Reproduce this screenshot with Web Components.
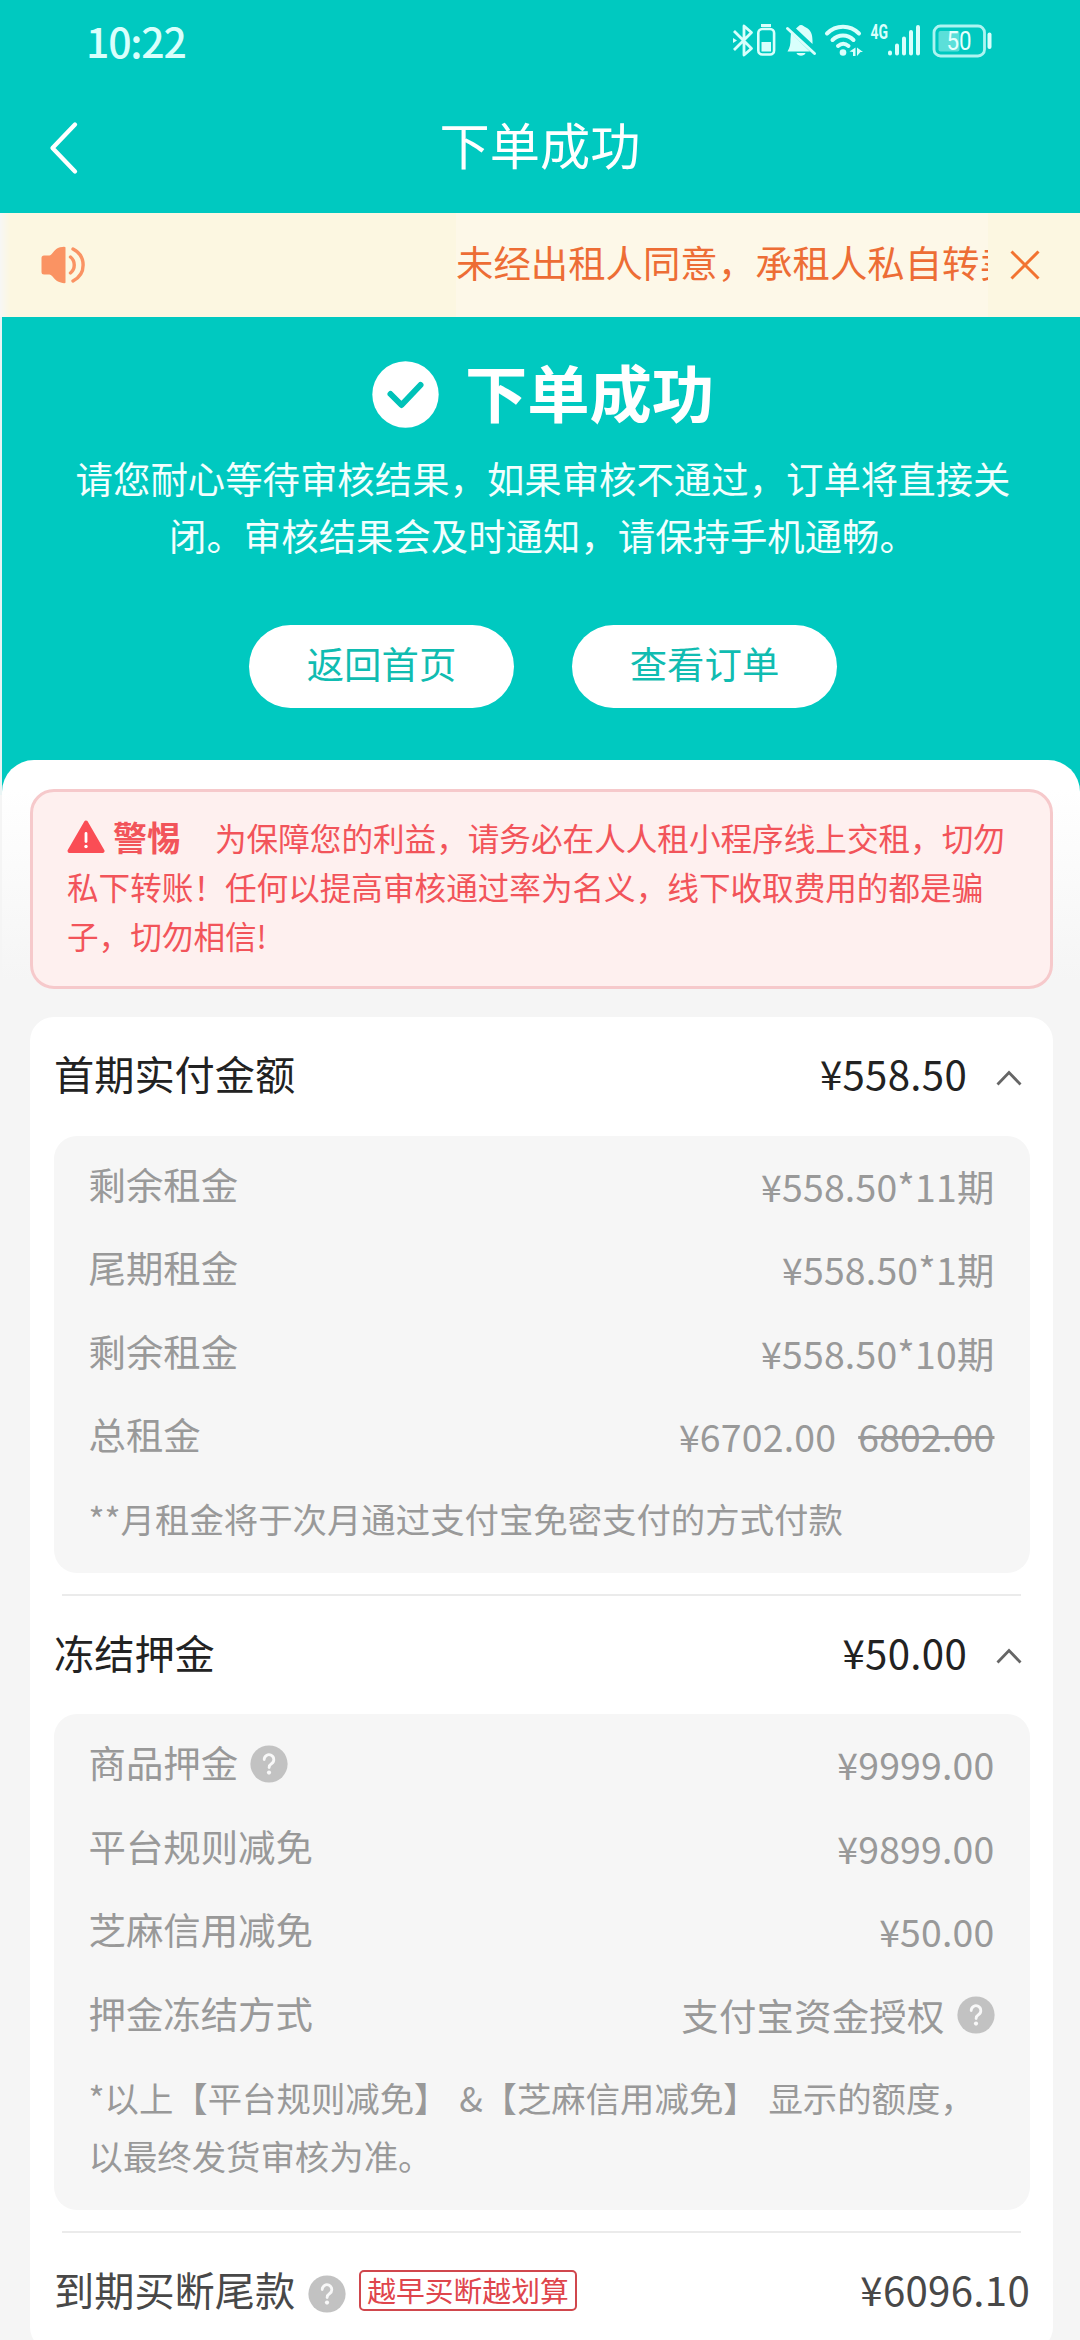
<!DOCTYPE html>
<html lang="zh-CN">
<head>
<meta charset="utf-8">
<title>下单成功</title>
<style>
html,body{margin:0;padding:0}
body{width:1080px;height:2340px;overflow:hidden;background:#f5f5f5;font-family:"Noto Sans CJK SC",sans-serif}
</style>
</head>
<body>
<order-page></order-page>
<script>
const define = (name, html) => {
  const tpl = document.createElement('template');
  tpl.innerHTML = html;
  customElements.define(name, class extends HTMLElement {
    constructor() {
      super();
      this.attachShadow({ mode: 'open' }).append(tpl.content.cloneNode(true));
    }
  });
};

define('help-icon', `
<style>:host{display:block;width:38px;height:38px;flex:none}svg{display:block}</style>
<svg width="38" height="38" viewBox="0 0 38 38"><circle cx="19" cy="19" r="18.6" fill="#c2c2c2"/>
<path d="M14.2 14.600a4.800 4.800 0 1 1 7.500 3.900c-1.800 1.200-2.600 2-2.600 4" fill="none" stroke="#f8f8f8" stroke-width="2.800" stroke-linecap="round"/><circle cx="19" cy="27.600" r="2.100" fill="#f8f8f8"/></svg>`);

define('fold-arrow', `
<style>:host{display:block;width:26px;height:16px;flex:none}svg{display:block}</style>
<svg width="26" height="16" viewBox="0 0 26 16"><path d="M1.500 14.500 13 2.500 24.500 14.500" fill="none" stroke="#666" stroke-width="2.800"/></svg>`);

define('status-bar', `
<style>
:host{display:flex;justify-content:space-between;align-items:center;height:84px;padding:0 86px 0 86px;color:#d9fffc;box-sizing:border-box}
.t{font-size:41px;line-height:80px;letter-spacing:-1.200px;font-weight:500;padding-bottom:4px}
svg{display:block;margin-bottom:4px}
</style>
<span class="t">10:22</span>
<svg width="266" height="48" viewBox="728 16 266 48" fill="none" stroke="#d9fffc">
  <path d="M734 31 751.500 48.500 744 55V26L751.500 32.500 734 50" stroke-width="2.800" stroke-linejoin="round"/>
  <path d="M733 38l4 2.500-4 2.500z" fill="#d9fffc" stroke="none"/>
  <rect x="758.300" y="29" width="15.800" height="25.500" rx="4" stroke-width="2.600"/>
  <path d="M761 25.500h10" stroke-width="3"/><rect x="761.500" y="42" width="9.500" height="9.500" fill="#d9fffc" stroke="none"/>
  <path d="M791 33 810 51.500H787.500C790 47.500 790.500 44 790.500 39ZM796 28.500C798 27 799 25 801 25c2 0 3 1.500 5 2.500 5 2.500 6.500 7 6.500 13.500V44ZM796.500 53h9c-1 3.500-8 3.500-9 0z" fill="#d9fffc" stroke="none"/>
  <path d="M787.500 28.500 814.500 53.500" stroke-width="3" stroke-linecap="round"/>
  <path d="M827 33.500c9-9 23-9 32 0M832.500 40c6-6 15-6 21 0M838 46c3.500-3 7-3 10.500 0" stroke-width="4" stroke-linecap="round"/>
  <circle cx="843" cy="52.500" r="3.300" fill="#d9fffc" stroke="none"/>
  <path d="M849.500 51.500l6-4v8.500h-2.500v-4zM857 47.500l6 4.500h-2.500l-3.500 4z" fill="#d9fffc" stroke="none"/>
  <text x="870.500" y="39.200" font-family="Roboto" font-size="19.500" font-weight="700" fill="#d9fffc" stroke="none" textLength="17.500" lengthAdjust="spacingAndGlyphs">4G</text>
  <path d="M890 52.500v1M897 45.500v8M904 38.500v15M911 32v21.500M918 27v26.500" stroke-width="4" stroke-linecap="round"/>
  <rect x="934" y="26" width="50.500" height="30" rx="6.500" stroke-width="2.800" opacity=".8"/>
  <rect x="938.500" y="31" width="21" height="20.500" rx="2" fill="#d9fffc" fill-opacity=".42" stroke="none"/>
  <path d="M989.500 34.500v12.500" stroke-width="4" stroke-linecap="round"/>
  <text x="959" y="50.300" text-anchor="middle" font-family="Roboto" font-size="25" fill="#e6fffd" stroke="none" textLength="25" lengthAdjust="spacingAndGlyphs">50</text>
</svg>`);

define('nav-bar', `
<style>
:host{display:grid;grid-template-columns:120px 1fr 120px;align-items:center;height:129px;color:#fff}
svg{display:block;margin-left:47px;margin-top:-1px}
.t{text-align:center;font-size:50.200px;line-height:72px;margin-top:-12px;font-weight:400}
</style>
<svg width="34" height="54" viewBox="0 0 34 54"><path d="M28 3.500 5.500 27 28 50.500" fill="none" stroke="#fff" stroke-width="4.300" stroke-linecap="round" stroke-linejoin="round"/></svg>
<span class="t"><slot></slot></span>`);

define('notice-bar', `
<style>
:host{display:flex;align-items:center;height:104px;background:linear-gradient(90deg,#f7f7f5,#fcf7e1 10px);color:#ed6d35}
.i{width:456px;flex:none}.i svg{display:block;margin-left:40px}
.m{width:532px;height:104px;background:#fdf8e8;overflow:hidden;white-space:nowrap;font-size:37.400px;line-height:98px}
.x{margin-left:22px}svg{display:block}
</style>
<div class="i"><svg width="48" height="40" viewBox="0 0 48 40"><path d="M4 10.500H9.500C13 9.500 14 4 20 2.300Q25.500 1 25.500 2.500V37.500Q25.500 39 20 37.300C14 35.500 13 30 9.500 29.500H4Q1.500 29.500 1.500 27V13Q1.500 10.500 4 10.500Z" fill="#fa9363"/><path d="M30.500 12C35.500 16 35.500 24 30.500 28M33 4C46.500 11 46.500 29 33 36" fill="none" stroke="#fa9363" stroke-width="3.400" stroke-linecap="round"/></svg></div>
<div class="m"><slot></slot></div>
<svg class="x" width="30" height="30" viewBox="0 0 30 30"><path d="M1.500 1.500 28.500 28.500M28.500 1.500 1.500 28.500" stroke="#f27330" stroke-width="3"/></svg>`);

define('pill-button', `
<style>:host{display:block;width:265px;height:83px;border-radius:42px;background:#fff;color:#10bcb1;text-align:center;font-size:37.400px;line-height:77px}</style>
<slot></slot>`);

define('order-hero', `
<style>
:host{display:flex;flex-direction:column;align-items:center;height:478px;padding:0 0 0 6px;background:linear-gradient(90deg,#e9f4f4 2px,#00c9c0 2px);color:#fff;box-sizing:border-box}
.h{display:flex;align-items:center;gap:26px;height:90px;margin-top:32px;font-weight:700;font-size:62.300px;line-height:90px}
.h span{margin-top:-7px}
p{margin:10.500px 0 0;width:980px;text-align:center;font-size:37.400px;line-height:57.500px;color:#f2fffe}
.b{display:flex;gap:58px;margin-top:60.500px}
svg{display:block}
</style>
<div class="h"><svg width="67" height="67" viewBox="0 0 67 67"><circle cx="33.500" cy="33.500" r="33.200" fill="#fff"/><path d="M18.500 33 29.500 44 48.500 24" fill="none" stroke="#00c2b8" stroke-width="6" stroke-linecap="round" stroke-linejoin="round"/></svg><span><slot name="title"></slot></span></div>
<p><slot name="desc"></slot></p>
<div class="b"><slot></slot></div>`);

define('alert-box', `
<style>
:host{display:block;height:200px;box-sizing:border-box;border:3px solid #f6c9cb;border-radius:24px;background:#fef0ef;color:#f2545a;padding:20.500px 0 0 34px;font-size:31.600px;line-height:49px;white-space:nowrap}
.l{display:flex;align-items:center;height:49px}
b{font-size:34px;margin:-2px 34px 0 8px}
svg{display:block}
</style>
<div class="l"><svg width="38" height="34" viewBox="0 0 38 34"><path d="M19 2.500 35.500 31H2.500Z" fill="#fa4d55" stroke="#fa4d55" stroke-width="4" stroke-linejoin="round"/><path d="M19 13.500v8" stroke="#fff" stroke-width="2.800" stroke-linecap="round"/><circle cx="19" cy="26.500" r="1.700" fill="#fff"/></svg><b><slot name="title"></slot></b><slot name="first"></slot></div>
<slot></slot>`);

define('fee-head', `
<style>
:host{display:flex;align-items:center;justify-content:space-between;height:118.500px;padding:0 31px 0 24px;font-size:40.200px;line-height:60px;color:#222;box-sizing:border-box}
.r{display:flex;align-items:center;gap:29px;letter-spacing:.3px}
.t{padding-bottom:6px}
fold-arrow{margin-top:3px}
</style>
<span class="t"><slot></slot></span><span class="r"><span class="t"><slot name="value"></slot></span><fold-arrow></fold-arrow></span>`);

define('fee-panel', `
<style>:host{display:block;margin:0 23.500px;padding:8px 35px 0;border-radius:23px;background:#f6f6f6;color:#999;box-sizing:border-box;font-size:37.400px}</style>
<slot></slot>`);

define('fee-row', `
<style>
:host{display:flex;justify-content:space-between;height:83.500px;line-height:80px}
.l,.r{display:flex;align-items:center;height:80px}
.r{padding-top:2px;letter-spacing:.2px}
::slotted(help-icon){margin-left:12px;margin-top:3px}
::slotted(help-icon[slot]){margin-top:0}
::slotted(s){margin-left:22px}
</style>
<span class="l"><slot></slot></span><span class="r"><slot name="value"></slot></span>`);

define('fee-note', `
<style>:host{display:block;font-size:34.400px;line-height:58px;padding-top:11.500px;white-space:nowrap;word-spacing:3px}</style>
<slot></slot>`);

define('fee-line', `<style>:host{display:block;height:2px;margin:21px 32px 0;background:#ebebeb}</style>`);

define('buyout-row', `
<style>
:host{display:flex;align-items:center;height:114px;padding:0 23px 0 24px;color:#484848;font-size:40.200px;line-height:60px}
.t{padding-bottom:2px}
help-icon{margin:7px 13px 0 13px}
.tag{box-sizing:border-box;height:41px;border:2px solid #d0474d;border-radius:5px;padding:0 6px;margin-top:1px;font-size:28.800px;line-height:35px;color:#df454c}
.v{margin-left:auto;padding-bottom:3px;letter-spacing:.3px}
</style>
<span class="t"><slot></slot></span><help-icon></help-icon><span class="tag"><slot name="tag"></slot></span><span class="v"><slot name="value"></slot></span>`);

define('order-page', `
<style>
:host{display:block;width:1080px;height:2340px;overflow:hidden;background:#f5f5f5}
.top{background:#00c9c0}
.sheet{margin:-35px 0 0 2px;height:1580px;padding:29px 27px 0 28px;box-sizing:border-box;border-radius:32px 32px 0 0;background:linear-gradient(#fff 30px,#f5f5f5 220px)}
.card{margin-top:28px;height:1334px;border-radius:24px;background:#fff;overflow:hidden}
.p1{height:437px}.p2{height:496px}
</style>
<div class="top"><status-bar></status-bar><nav-bar>下单成功</nav-bar></div>
<notice-bar>未经出租人同意，承租人私自转卖</notice-bar>
<order-hero>
  <span slot="title">下单成功</span>
  <span slot="desc">请您耐心等待审核结果，如果审核不通过，订单将直接关<br>闭。审核结果会及时通知，请保持手机通畅。</span>
  <pill-button>返回首页</pill-button><pill-button>查看订单</pill-button>
</order-hero>
<div class="sheet">
  <alert-box><span slot="title">警惕</span><span slot="first">为保障您的利益，请务必在人人租小程序线上交租，切勿</span>私下转账！任何以提高审核通过率为名义，线下收取费用的都是骗<br>子，切勿相信!</alert-box>
  <div class="card">
    <fee-head>首期实付金额<span slot="value">¥558.50</span></fee-head>
    <fee-panel class="p1">
      <fee-row>剩余租金<span slot="value">¥558.50*11期</span></fee-row>
      <fee-row>尾期租金<span slot="value">¥558.50*1期</span></fee-row>
      <fee-row>剩余租金<span slot="value">¥558.50*10期</span></fee-row>
      <fee-row>总租金<span slot="value">¥6702.00</span><s slot="value">6802.00</s></fee-row>
      <fee-note>**月租金将于次月通过支付宝免密支付的方式付款</fee-note>
    </fee-panel>
    <fee-line></fee-line>
    <fee-head>冻结押金<span slot="value">¥50.00</span></fee-head>
    <fee-panel class="p2">
      <fee-row>商品押金<help-icon></help-icon><span slot="value">¥9999.00</span></fee-row>
      <fee-row>平台规则减免<span slot="value">¥9899.00</span></fee-row>
      <fee-row>芝麻信用减免<span slot="value">¥50.00</span></fee-row>
      <fee-row>押金冻结方式<span slot="value">支付宝资金授权</span><help-icon slot="value"></help-icon></fee-row>
      <fee-note>*以上【平台规则减免】 &amp;【芝麻信用减免】 显示的额度，<br>以最终发货审核为准。</fee-note>
    </fee-panel>
    <fee-line></fee-line>
    <buyout-row>到期买断尾款<span slot="tag">越早买断越划算</span><span slot="value">¥6096.10</span></buyout-row>
  </div>
</div>`);
</script>
</body>
</html>
